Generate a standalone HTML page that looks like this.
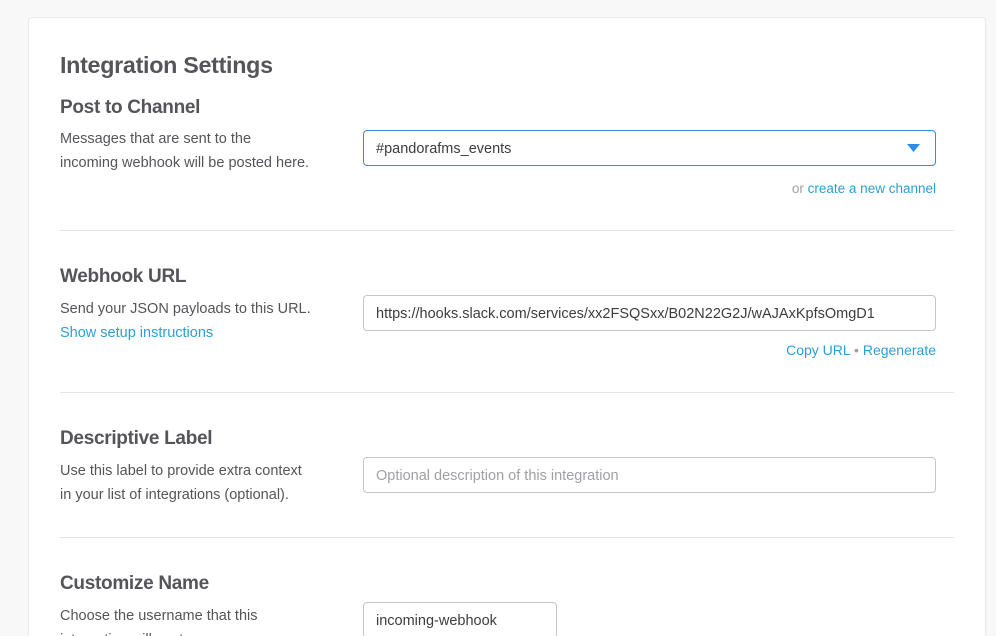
<!DOCTYPE html>
<html style="height:636px;overflow:hidden"><head><style>
html,body{height:636px;overflow:hidden}
body{margin:0;background:#f8f8f8;width:996px;font-family:"Liberation Sans",sans-serif;color:#555459;position:relative}
.card{position:absolute;left:28px;top:17px;width:958px;height:630px;background:#fff;border:1px solid #e8e8e8;border-bottom:none;border-radius:4px 4px 0 0;box-sizing:border-box}
h1{position:absolute;margin:0;font-size:23.3px;font-weight:bold;left:60px;top:52px;color:#555459;letter-spacing:-0.3px}
h2{position:absolute;margin:0;font-size:19px;font-weight:bold;left:60px;color:#555459;letter-spacing:-0.3px}
.d{position:absolute;left:60px;font-size:14.5px;line-height:24px;color:#555459}
.in{position:absolute;left:363px;width:573px;height:36px;border:1px solid #c5c5c5;border-radius:4px;box-sizing:border-box;font-size:14.5px;line-height:36px;padding-left:12px;overflow:hidden;white-space:nowrap;color:#3d3c40}
.hr{position:absolute;left:60px;width:894px;height:1px;background:#e5e5e5}
.lk{color:#2a9fd6}
.sm{position:absolute;font-size:13.5px;right:60px;color:#9e9ea6}
</style></head><body>
<div class="card"></div>
<h1>Integration Settings</h1>
<h2 style="top:97px">Post to Channel</h2>
<div class="d" style="top:127px">Messages that are sent to the<br>incoming webhook will be posted here.</div>
<div class="in" style="top:130px;border-color:#2d8de8">#pandorafms_events
<svg style="position:absolute;right:15px;top:13px" width="13" height="8"><path d="M0 0H13L6.5 8Z" fill="#2d8de8"/></svg></div>
<div class="sm" style="top:181px">or <span class="lk">create a new channel</span></div>
<div class="hr" style="top:230px"></div>
<h2 style="top:266px">Webhook URL</h2>
<div class="d" style="top:297px">Send your JSON payloads to this URL.<br><span class="lk">Show setup instructions</span></div>
<div class="in" style="top:295px">https://hooks.slack.com/services/xx2FSQSxx/B02N22G2J/wAJAxKpfsOmgD1</div>
<div class="sm" style="top:342px;font-size:14px"><span class="lk">Copy URL</span> • <span class="lk">Regenerate</span></div>
<div class="hr" style="top:392px"></div>
<h2 style="top:428px">Descriptive Label</h2>
<div class="d" style="top:459px">Use this label to provide extra context<br>in your list of integrations (optional).</div>
<div class="in" style="top:457px;color:#a0a0a5">Optional description of this integration</div>
<div class="hr" style="top:537px"></div>
<h2 style="top:573px">Customize Name</h2>
<div class="d" style="top:604px">Choose the username that this<br>integration will post as.</div>
<div class="in" style="top:602px;width:194px">incoming-webhook</div>
</body></html>
